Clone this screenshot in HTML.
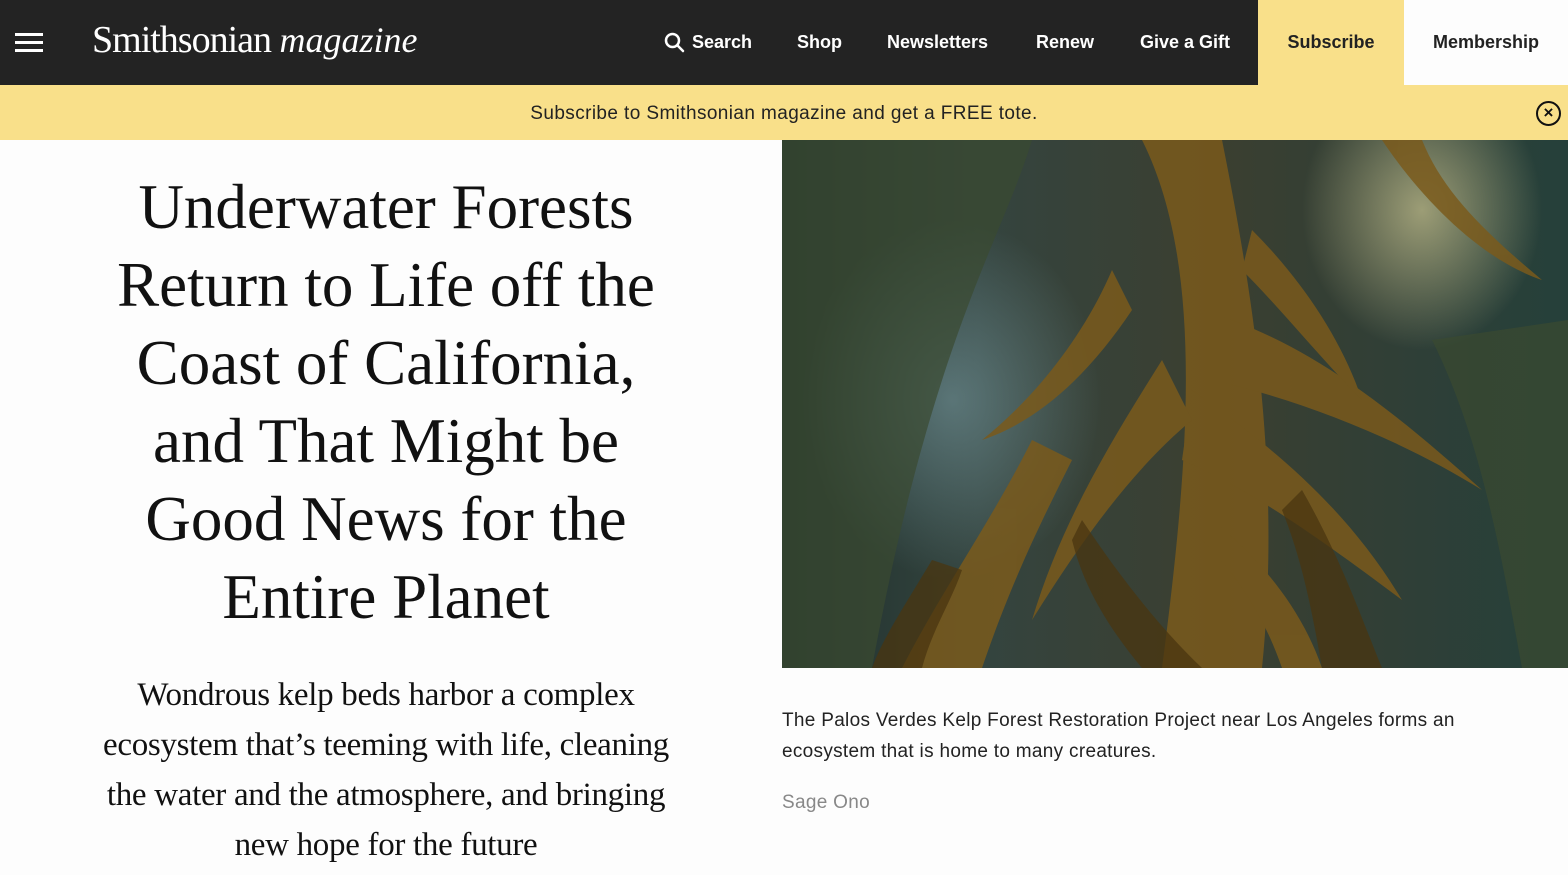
<!DOCTYPE html>
<html><head><meta charset="utf-8"><style>
*{margin:0;padding:0;box-sizing:border-box}
body{width:1568px;height:875px;overflow:hidden;background:#fdfdfd;font-family:"Liberation Sans",sans-serif;position:relative}
.nav{position:absolute;left:0;top:0;width:1568px;height:85px;background:#232323}
.burger{position:absolute;left:15px;top:33px;width:28px}
.burger i{display:block;height:3px;background:#fff;margin-bottom:5px}
.logo{position:absolute;left:92px;top:18px;color:#fff;font-family:"Liberation Serif",serif;font-size:38px;letter-spacing:-1px;white-space:nowrap}
.logo em{font-size:36px;letter-spacing:0}
.nl{position:absolute;top:32px;color:#fff;font-weight:bold;font-size:18px}
.sub{position:absolute;left:1258px;top:0;width:146px;height:85px;background:#f9e08a;color:#222;font-weight:bold;font-size:18px;text-align:center;line-height:84px}
.mem{position:absolute;left:1404px;top:0;width:164px;height:85px;background:#fdfdfd;color:#222;font-weight:bold;font-size:18px;text-align:center;line-height:84px}
.banner{position:absolute;left:0;top:85px;width:1568px;height:55px;background:#f9e08a;text-align:center;font-size:19px;letter-spacing:.4px;color:#222;line-height:58px}
.close{position:absolute;left:1536px;top:101px;width:25px;height:25px;border:2.5px solid #111;border-radius:50%;text-align:center;font-weight:bold;font-size:17px;line-height:19px;color:#111}
h1{position:absolute;left:0;top:168px;width:772px;text-align:center;font-family:"Liberation Serif",serif;font-weight:normal;font-size:63px;line-height:78px;color:#111;letter-spacing:0}
.dek{position:absolute;left:86px;top:670px;width:600px;text-align:center;font-family:"Liberation Serif",serif;font-size:33px;line-height:50px;color:#111;letter-spacing:-.3px}
.photo{position:absolute;left:782px;top:140px;width:786px;height:528px;overflow:hidden;
background:
radial-gradient(ellipse 120px 140px at 640px 70px,rgba(230,220,160,.6),transparent),
radial-gradient(ellipse 150px 180px at 170px 260px,rgba(140,180,190,.45),transparent),
linear-gradient(90deg,#1f302c 0%,#34443f 25%,#3b3f30 55%,#2f3f37 80%,#25403a 100%)}
.cap{position:absolute;left:782px;top:705px;width:720px;font-size:19px;letter-spacing:.3px;line-height:31px;color:#222}
.credit{position:absolute;left:782px;top:792px;font-size:19px;letter-spacing:.3px;color:#888}
</style></head><body>
<div class="nav">
<div class="burger"><i></i><i></i><i></i></div>
<div class="logo">Smithsonian <em>magazine</em></div>
<svg style="position:absolute;left:664px;top:32px" width="21" height="21" viewBox="0 0 21 21"><circle cx="8.5" cy="8.5" r="6.5" fill="none" stroke="#fff" stroke-width="2.5"/><line x1="13.3" y1="13.3" x2="19" y2="19" stroke="#fff" stroke-width="2.5" stroke-linecap="round"/></svg>
<div class="nl" style="left:692px">Search</div>
<div class="nl" style="left:797px">Shop</div>
<div class="nl" style="left:887px">Newsletters</div>
<div class="nl" style="left:1036px">Renew</div>
<div class="nl" style="left:1140px">Give a Gift</div>
</div>
<div class="sub">Subscribe</div>
<div class="mem">Membership</div>
<div class="banner">Subscribe to Smithsonian magazine and get a FREE tote.</div>
<div class="close">×</div>
<h1>Underwater Forests<br>Return to Life off the<br>Coast of California,<br>and That Might be<br>Good News for the<br>Entire Planet</h1>
<div class="dek">Wondrous kelp beds harbor a complex<br>ecosystem that’s teeming with life, cleaning<br>the water and the atmosphere, and bringing<br>new hope for the future</div>
<div class="photo">
<svg width="786" height="528" viewBox="0 0 786 528">
<g fill="#3a4a30" opacity=".7">
<path d="M0 0 L250 0 C220 100 150 200 90 528 L0 528Z"/>
<path d="M650 200 C700 300 720 420 740 528 L786 528 L786 180Z"/>
</g>
<g fill="#7a5a1c" opacity=".85">
<path d="M360 0 C420 120 410 300 380 528 L480 528 C500 330 470 150 440 0Z"/>
<path d="M420 170 C520 200 600 260 700 350 C620 300 520 260 430 240Z"/>
<path d="M410 250 C480 300 560 360 620 460 C540 400 470 350 400 320Z"/>
<path d="M380 220 C330 300 280 380 250 480 C300 400 350 330 410 280Z"/>
<path d="M250 300 C210 380 160 450 120 528 L200 528 C230 440 260 380 290 320Z"/>
<path d="M600 0 C640 60 700 120 760 140 C700 90 660 50 640 0Z"/>
<path d="M330 130 C300 200 250 260 200 300 C260 280 310 230 350 170Z"/>
<path d="M470 90 C520 140 560 200 580 260 C540 220 500 170 460 130Z"/>
<path d="M430 380 C480 420 520 470 540 528 L500 528 C480 470 450 430 420 400Z"/>
</g>
<g fill="#4a3510" opacity=".75">
<path d="M300 380 C340 440 380 490 420 528 L360 528 C320 480 300 440 290 400Z"/>
<path d="M520 350 C560 420 580 480 600 528 L540 528 C530 470 520 420 500 370Z"/>
<path d="M150 420 C120 470 100 500 90 528 L140 528 C150 490 170 460 180 430Z"/>
</g>
</svg>
</div>
<div class="cap">The Palos Verdes Kelp Forest Restoration Project near Los Angeles forms an ecosystem that is home to many creatures.</div>
<div class="credit">Sage Ono</div>
</body></html>
